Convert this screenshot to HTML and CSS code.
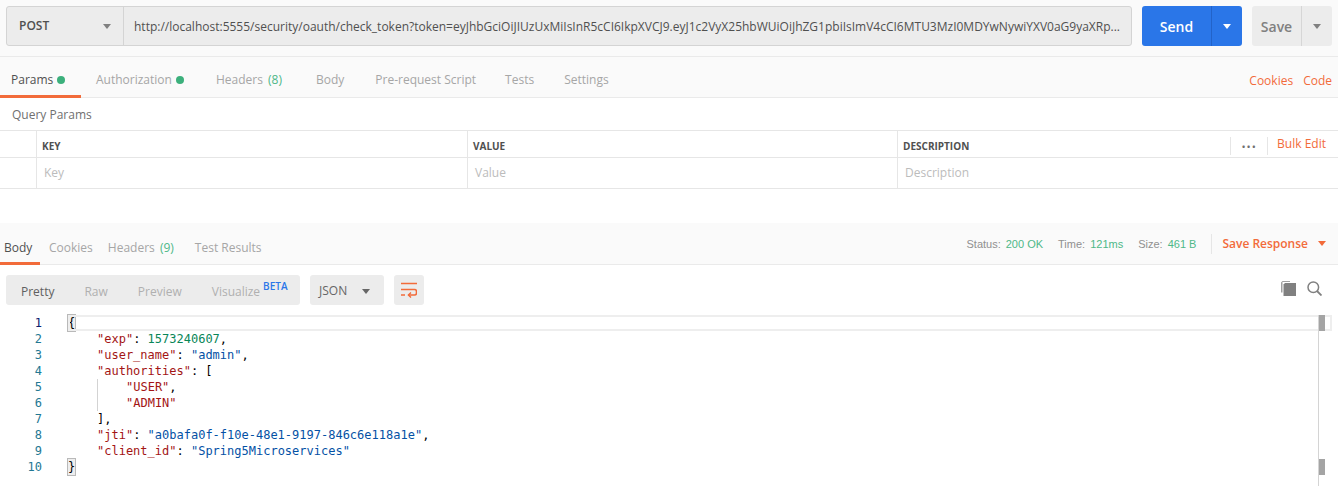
FILE: index.html
```html
<!DOCTYPE html>
<html lang="en">
<head>
<meta charset="utf-8">
<title>Postman request</title>
<link rel="stylesheet" href="styles.css">
</head>
<body>
<header class="request-bar">
  <div class="address">
    <div class="method"><span>POST</span><i class="caret caret-grey"></i></div>
    <div class="url">http://localhost:5555/security/oauth/check_token?token=eyJhbGciOiJIUzUxMiIsInR5cCI6IkpXVCJ9.eyJ1c2VyX25hbWUiOiJhZG1pbiIsImV4cCI6MTU3MzI0MDYwNywiYXV0aG9yaXRp...</div>
  </div>
  <div class="split send"><span class="split-main">Send</span><span class="split-arrow"><i class="caret caret-white"></i></span></div>
  <div class="split save"><span class="split-main">Save</span><span class="split-arrow"><i class="caret caret-grey"></i></span></div>
</header>

<nav class="req-tabs">
  <a class="tab active">Params<b class="dot"></b></a>
  <a class="tab">Authorization<b class="dot"></b></a>
  <a class="tab">Headers <em>(8)</em></a>
  <a class="tab">Body</a>
  <a class="tab">Pre-request Script</a>
  <a class="tab">Tests</a>
  <a class="tab">Settings</a>
  <div class="req-links"><a>Cookies</a><a>Code</a></div>
</nav>

<div class="query-title">Query Params</div>
<div class="params">
  <div class="row head">
    <div class="check"></div>
    <div class="cell key">KEY</div>
    <div class="cell val">VALUE</div>
    <div class="cell desc">DESCRIPTION
      <div class="bulk"><span class="more">•••</span><a>Bulk Edit</a></div>
    </div>
  </div>
  <div class="row body-row">
    <div class="check"></div>
    <div class="cell key">Key</div>
    <div class="cell val">Value</div>
    <div class="cell desc">Description</div>
  </div>
</div>

<nav class="res-tabs">
  <a class="tab active">Body</a>
  <a class="tab">Cookies</a>
  <a class="tab">Headers <em>(9)</em></a>
  <a class="tab">Test Results</a>
  <div class="meta">
    <span>Status:</span><strong>200 OK</strong>
    <span class="gap">Time:</span><strong>121ms</strong>
    <span class="gap">Size:</span><strong>461 B</strong>
    <a class="save-res">Save Response<i class="caret caret-orange"></i></a>
  </div>
</nav>

<div class="toolbar">
  <div class="modes">
    <span class="mode on">Pretty</span>
    <span class="mode">Raw</span>
    <span class="mode">Preview</span>
    <span class="mode">Visualize<sup>BETA</sup></span>
  </div>
  <div class="format"><span>JSON</span><i class="caret caret-dark"></i></div>
  <div class="wrap">
    <svg width="16" height="16" viewBox="0 0 16 16" fill="none" stroke="#f26b3a" stroke-width="1.6"><path d="M0 1.500h16M0 7.500h13.500a2 2 0 0 1 2 2v1.500a2 2 0 0 1-2 2H7.500M0 13h4"/><path d="M10 10.500l-2.600 2.500 2.600 2.500" stroke-width="1.400"/></svg>
  </div>
  <div class="tools">
    <svg width="15" height="15" viewBox="0 0 15 15" fill="#808080"><path d="M0 1.500 1.500 0H9v1H1.500v10.500H0z" opacity=".75"/><path d="M2.500 3.500 4 2h11v13H2.500z"/></svg>
    <svg width="15" height="15" viewBox="0 0 15 15" fill="none" stroke="#808080" stroke-width="1.500"><circle cx="6.300" cy="6.300" r="5.300"/><path d="m10 10 4.500 4.500" stroke-width="1.800"/></svg>
  </div>
</div>

<section class="editor">
  <ol class="gutter">
    <li class="cur">1</li><li>2</li><li>3</li><li>4</li><li>5</li><li>6</li><li>7</li><li>8</li><li>9</li><li>10</li>
  </ol>
  <div class="code">
    <div class="line cur-line"><span class="br">{</span></div>
    <div class="line i1"><span class="k">"exp"</span>: <span class="n">1573240607</span>,</div>
    <div class="line i1"><span class="k">"user_name"</span>: <span class="s">"admin"</span>,</div>
    <div class="line i1"><span class="k">"authorities"</span>: [</div>
    <div class="line i2"><span class="k">"USER"</span>,</div>
    <div class="line i2"><span class="k">"ADMIN"</span></div>
    <div class="line i1">],</div>
    <div class="line i1"><span class="k">"jti"</span>: <span class="s">"a0bafa0f-f10e-48e1-9197-846c6e118a1e"</span>,</div>
    <div class="line i1"><span class="k">"client_id"</span>: <span class="s">"Spring5Microservices"</span></div>
    <div class="line"><span class="br">}</span></div>
    <div class="scroll"><b class="thumb"></b><b class="thumb low"></b></div>
  </div>
</section>
</body>
</html>
```
FILE: styles.css
```css
* { box-sizing: border-box; }
html, body { margin: 0; height: 486px; overflow: hidden; background: #fff; }
body { font: 12px/16px "Open Sans", sans-serif; color: #808080; }
a, em, i, b, strong { font-style: normal; font-weight: 400; }

.caret { display: inline-block; width: 0; height: 0; border: 4px solid transparent; border-bottom: 0; border-top-width: 5px; }
.caret-grey { border-top-color: #808080; }
.caret-white { border-top-color: #fff; }
.caret-dark { border-top-color: #666; }
.caret-orange { border-top-color: #f26b3a; }

.request-bar { height: 57px; padding: 6px 6px 0; display: flex; background: #fafafa; border-bottom: 1px solid #eaeaea; }
.address { width: 1126px; height: 40px; display: flex; background: #ececec; border: 1px solid #d4d4d4; border-radius: 3px; }
.method { width: 117px; flex: none; display: flex; align-items: center; justify-content: space-between; padding: 0 12px 0 12px; border-right: 1px solid #d4d4d4; font-size: 12px; font-weight: 600; color: #505050; }
.url { padding-left: 10px; line-height: 40px; font-size: 12px; color: #505050; white-space: nowrap; overflow: hidden; }
.split { height: 40px; display: flex; border-radius: 3px; font-size: 14px; font-weight: 600; line-height: 42px; }
.split-main { text-align: center; }
.split-arrow { display: flex; align-items: center; justify-content: center; }
.send { width: 100px; margin-left: 10px; background: #2a76e8; color: #fff; }
.send .split-main { width: 70px; border-right: 1px solid #2263c9; }
.send .split-arrow { flex: 1; }
.save { width: 80px; margin-left: 10px; background: #ececec; color: #808080; }
.save .split-main { width: 50px; border-right: 1px solid #d6d6d6; }
.save .split-arrow { flex: 1; }

.req-tabs, .res-tabs { display: flex; background: #fafafa; border-bottom: 1px solid #eaeaea; }
.req-tabs { height: 41px; }
.tab { position: relative; padding: 0 11px; color: #a6a6a6; font-size: 12px; line-height: 46px; white-space: nowrap; }
.tab em { color: #4eb888; margin-left: 2px; }
.tab.active { color: #505050; }
.tab.active::after { content: ""; position: absolute; left: 0; right: 0; bottom: -1px; height: 3px; background: #f26b3a; }
.dot { display: inline-block; width: 8px; height: 8px; margin-left: 4px; border-radius: 50%; background: #3cb07c; }
.req-tabs .active { width: 81px; }
.req-tabs .tab:nth-child(2) { margin-left: 4px; }
.req-tabs .tab:nth-child(3) { margin-left: 10px; }
.req-tabs .tab:nth-child(4) { margin-left: 12px; }
.req-tabs .tab:nth-child(5) { margin-left: 9px; }
.req-tabs .tab:nth-child(6) { margin-left: 7px; }
.req-tabs .tab:nth-child(7) { margin-left: 8px; }
.req-links { margin-left: auto; display: flex; gap: 10px; padding-right: 6px; line-height: 48px; color: #f26b3a; }

.query-title { height: 32px; padding-left: 12px; line-height: 34px; color: #707070; font-size: 12px; }
.params { border-top: 1px solid #e6e6e6; }
.row { display: flex; border-bottom: 1px solid #e6e6e6; }
.head { height: 27px; font-size: 10px; font-weight: 700; color: #505050; line-height: 30px; }
.body-row { height: 31px; font-size: 12px; color: #bcbcbc; line-height: 30px; }
.check { width: 37px; border-right: 1px solid #e6e6e6; flex: none; }
.cell { width: 431px; flex: none; padding-left: 5px; border-right: 1px solid #e6e6e6; }
.cell.val { width: 430px; }
.body-row .cell { padding-left: 7px; }
.desc { flex: 1; border-right: 0; position: relative; }
.bulk { position: absolute; right: 12px; top: 5px; display: flex; align-items: center; height: 16px; font-size: 12px; font-weight: 400; line-height: 16px; }
.more { width: 38px; height: 18px; margin-top: 4px; text-align: center; border-left: 1px solid #e6e6e6; border-right: 1px solid #e6e6e6; color: #707070; font-size: 11px; line-height: 20px; letter-spacing: 1px; margin-right: 9px; }
.bulk a { color: #f26b3a; }

.res-tabs { height: 42px; margin-top: 34px; padding-right: 12px; }
.res-tabs .tab { padding: 0 4px; line-height: 49px; }
.res-tabs .active { width: 40px; }
.res-tabs .tab:nth-child(2) { margin-left: 5px; }
.res-tabs .tab:nth-child(3) { margin-left: 7px; }
.res-tabs .tab:nth-child(4) { margin-left: 13px; }
.meta { margin-left: auto; display: flex; align-items: center; height: 41px; font-family: "Liberation Sans", sans-serif; font-size: 11px; color: #909090; }
.meta strong { color: #4eb888; margin-left: 5px; }
.meta .gap { margin-left: 15px; }
.save-res { display: flex; align-items: center; height: 20px; margin-left: 15px; padding-left: 10px; border-left: 1px solid #e6e6e6; font-family: "Open Sans", sans-serif; font-size: 12px; font-weight: 600; color: #f26b3a; }
.save-res i { margin-left: 10px; }

.toolbar { display: flex; height: 30px; margin: 10px 6px 0; }
.modes { width: 294px; display: flex; background: #ececec; border-radius: 3px; line-height: 34px; padding-left: 15px; gap: 30px; color: #b0b0b0; }
.mode.on { color: #606060; }
.mode sup { font-size: 10px; font-weight: 600; color: #2a76e8; line-height: 0; margin-left: 3px; vertical-align: 6px; }
.format { width: 74px; margin-left: 10px; padding: 2px 14px 0 9px; display: flex; align-items: center; justify-content: space-between; background: #ececec; border-radius: 3px; color: #666; }
.wrap { width: 30px; margin-left: 10px; display: flex; align-items: center; justify-content: center; background: #ececec; border-radius: 3px; }
.tools { margin-left: auto; display: flex; align-items: center; gap: 11px; padding: 0 10px 4px 0; }

.editor { display: flex; margin-top: 10px; font: 12px/16px "DejaVu Sans Mono", monospace; }
.gutter { width: 68px; flex: none; margin: 0; padding: 0 26px 0 0; list-style: none; text-align: right; color: #237893; }
.gutter .cur { color: #0b216f; }
.code { position: relative; flex: 1; height: 171px; margin-right: 6px; color: #000; }
.line { height: 16px; white-space: pre; }
.cur-line { outline: 2px solid #eeeeee; outline-offset: -2px; }
.i1 { padding-left: 29px; }
.i2 { padding-left: 58px; background: linear-gradient(#d3d3d3, #d3d3d3) 29px 0 / 1px 100% no-repeat; }
.k { color: #a31515; }
.s { color: #0451a5; }
.n { color: #098658; }
.br { display: inline-block; width: 7px; height: 16px; outline: 1px solid #b9b9b9; background: #eeeeee; line-height: 16px; }
.scroll { position: absolute; top: 0; bottom: 0; left: 1250px; width: 8px; border-left: 1px solid #d4d4d4; }
.thumb { display: block; width: 6px; height: 16px; background: #a4a4a4; }
.low { margin-top: 128px; }
```
